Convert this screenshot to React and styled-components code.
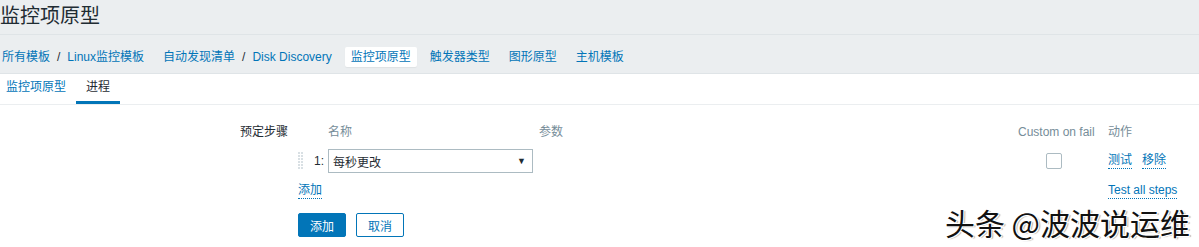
import React from "react";
import styled, { createGlobalStyle } from "styled-components";

const GlobalStyle = createGlobalStyle`
  html, body {
    margin: 0;
    padding: 0;
    background: #fff;
  }
  body {
    font-family: "Liberation Sans", Arial, "Noto Sans CJK SC", sans-serif;
    font-size: 12px;
    color: #1f2c33;
  }
`;

const Page = styled.div`
  position: relative;
  width: 1199px;
  height: 247px;
  overflow: hidden;
`;

const Header = styled.header`
  height: 34px;
  background: #ebeef0;
  border-bottom: 1px solid #dfe4e7;
  display: flex;
  align-items: center;
`;

const Title = styled.h1`
  margin: 0;
  font-size: 20px;
  font-weight: normal;
  line-height: 24px;
  color: #1f2c33;
  position: relative;
  top: -1px;
`;

const Nav = styled.nav`
  height: 39px;
  background: #ebeef0;
  border-bottom: 1px solid #dfe4e7;
  display: flex;
  align-items: flex-start;
  gap: 7px;
  padding-top: 12px;
  box-sizing: border-box;
  margin-left: -4px;
`;

const NavItem = styled.div`
  height: 20px;
  line-height: 20px;
  padding: 0 6px;
  border-radius: 2px;
  background: ${(p) => (p.$selected ? "#fff" : "transparent")};
  box-shadow: ${(p) => (p.$selected ? "0 1px 1px rgba(0,0,0,0.05)" : "none")};
  color: #0275b8;
  white-space: nowrap;
`;

const Sep = styled.span`
  color: #1f2c33;
  margin: 0 7px;
`;

const Tabs = styled.div`
  display: flex;
  height: 30px;
  border-bottom: 1px solid #ebeef0;
  margin-left: -4px;
`;

const Tab = styled.div`
  padding: 0 10px;
  line-height: 27px;
  border-bottom: 3px solid ${(p) => (p.$active ? "#0275b8" : "transparent")};
  color: ${(p) => (p.$active ? "#1f2c33" : "#0275b8")};
`;

const Form = styled.div`
  display: grid;
  grid-template-columns: 288px 1fr;
  column-gap: 10px;
  padding-top: 15px;
`;

const Label = styled.div`
  text-align: right;
  line-height: 24px;
`;

const Steps = styled.div`
  display: grid;
  grid-template-columns: 30px 211px 479px 90px 1fr;
  grid-template-rows: 24px 24px 26px;
  row-gap: 5px;
  align-items: center;
`;

const HeadCell = styled.div`
  color: #768d99;
  line-height: 24px;
  grid-column: ${(p) => p.$col || "auto"};
`;

const NumCell = styled.div`
  display: flex;
  align-items: center;
  height: 24px;
`;

const Grip = styled.span`
  width: 5px;
  height: 18px;
  margin-right: 11px;
  background-image: radial-gradient(circle at 1px 1px, #d9e0e4 1px, transparent 1.1px);
  background-size: 3px 3px;
`;

const Num = styled.span`
  color: #1f2c33;
`;

const Select = styled.div`
  box-sizing: border-box;
  width: 205px;
  height: 24px;
  border: 1px solid #acbbc2;
  display: flex;
  align-items: center;
  justify-content: space-between;
  padding: 0 6px 0 4px;
  background: #fff;
`;

const Arrow = styled.span`
  font-size: 9px;
  color: #1f2c33;
`;

const CheckCell = styled.div`
  display: flex;
  padding-left: 28px;
`;

const Checkbox = styled.span`
  box-sizing: border-box;
  width: 16px;
  height: 16px;
  border: 1px solid #acbbc2;
  border-radius: 2px;
  background: #fff;
`;

const Actions = styled.div`
  display: flex;
  gap: 10px;
`;

const Link = styled.span`
  color: #0275b8;
  border-bottom: 1px dotted #0275b8;
  line-height: 15px;
  white-space: nowrap;
`;

const FooterCell = styled.div`
  grid-column: ${(p) => p.$col};
  display: flex;
`;

const Buttons = styled.div`
  display: flex;
  gap: 10px;
  margin-top: 9px;
`;

const Button = styled.button`
  box-sizing: border-box;
  width: 48px;
  height: 24px;
  padding: 0;
  border-radius: 2px;
  font-family: inherit;
  font-size: 12px;
  border: 1px solid #0275b8;
  background: ${(p) => (p.$primary ? "#0275b8" : "#fff")};
  color: ${(p) => (p.$primary ? "#fff" : "#0275b8")};
`;

const Watermark = styled.div`
  position: absolute;
  right: 9px;
  top: 202px;
  font-family: "Noto Sans CJK SC", sans-serif;
  font-size: 30px;
  line-height: 40px;
  color: #111;
  text-shadow: 1px 1px 0 #fff, -1px -1px 0 #fff, 1px -1px 0 #fff, -1px 1px 0 #fff,
    2px 1px 1px rgba(0, 0, 0, 0.35);
  white-space: nowrap;
`;

export default function App() {
  return (
    <Page>
      <GlobalStyle />
      <Header>
        <Title>监控项原型</Title>
      </Header>
      <Nav>
        <NavItem>
          所有模板<Sep>/</Sep>Linux监控模板
        </NavItem>
        <NavItem>
          自动发现清单<Sep>/</Sep>Disk Discovery
        </NavItem>
        <NavItem $selected>监控项原型</NavItem>
        <NavItem>触发器类型</NavItem>
        <NavItem>图形原型</NavItem>
        <NavItem>主机模板</NavItem>
      </Nav>
      <Tabs>
        <Tab>监控项原型</Tab>
        <Tab $active>进程</Tab>
      </Tabs>
      <Form>
        <Label>预定步骤</Label>
        <div>
          <Steps>
            <HeadCell $col="2">名称</HeadCell>
            <HeadCell>参数</HeadCell>
            <HeadCell>Custom on fail</HeadCell>
            <HeadCell>动作</HeadCell>

            <NumCell>
              <Grip />
              <Num>1:</Num>
            </NumCell>
            <Select>
              <span>每秒更改</span>
              <Arrow>▼</Arrow>
            </Select>
            <div />
            <CheckCell>
              <Checkbox />
            </CheckCell>
            <Actions>
              <Link>测试</Link>
              <Link>移除</Link>
            </Actions>

            <FooterCell $col="1 / 3">
              <Link>添加</Link>
            </FooterCell>
            <FooterCell $col="5">
              <Link>Test all steps</Link>
            </FooterCell>
          </Steps>
          <Buttons>
            <Button $primary>添加</Button>
            <Button>取消</Button>
          </Buttons>
        </div>
      </Form>
      <Watermark>头条 @波波说运维</Watermark>
    </Page>
  );
}
